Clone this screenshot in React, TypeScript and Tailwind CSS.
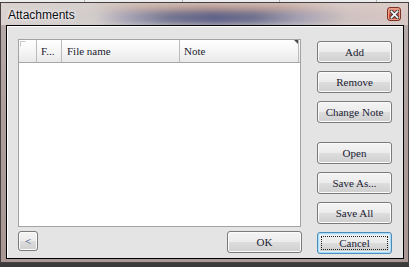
import type { ReactNode } from "react";

const serif = "font-['Liberation_Serif','Times_New_Roman',serif]";

function WinButton({
  children,
  className = "",
  focused = false,
}: {
  children: ReactNode;
  className?: string;
  focused?: boolean;
}) {
  return (
    <button
      className={
        "relative flex shrink-0 items-center justify-center rounded-[3px] border text-[11px] leading-none text-[#1c1c34] " +
        serif +
        " " +
        (focused
          ? "border-[#4f8bb8] bg-[linear-gradient(#f2f2f2_0%,#ebebeb_48%,#dcdcdc_52%,#cdcdcd_100%)] shadow-[inset_0_0_0_1px_#a9dcf6,inset_0_0_0_2px_#d4eefb] "
          : "border-[#7a7a7a] bg-[linear-gradient(#f4f4f4_0%,#ececec_48%,#dddddd_52%,#cfcfcf_100%)] shadow-[inset_0_0_0_1px_#fbfbfb] ") +
        className
      }
    >
      {children}
      {focused && <span className="pointer-events-none absolute inset-[3px] border border-dotted border-[#222]" />}
    </button>
  );
}

function CloseButton() {
  return (
    <div className="flex h-[14px] w-[14px] items-center justify-center rounded-[3px] border border-[#7c3326] bg-[linear-gradient(#e79a83_0%,#d9664c_45%,#c43f2a_55%,#d05a40_100%)] shadow-[inset_0_0_0_1px_#eba08c]">
      <svg width="9" height="9" viewBox="0 0 9 9">
        <path d="M1.5 1.5 L7.5 7.5 M7.5 1.5 L1.5 7.5" stroke="#3f3f4a" strokeWidth="3.4" strokeLinecap="square" />
        <path d="M1.5 1.5 L7.5 7.5 M7.5 1.5 L1.5 7.5" stroke="#ffffff" strokeWidth="1.6" strokeLinecap="square" />
      </svg>
    </div>
  );
}

export default function App() {
  return (
    <div className="flex h-[267px] w-[409px] flex-col overflow-hidden bg-[#3b3b3b]">
      {/* strip of whatever sits behind the dialog */}
      <div className="flex h-[2px] shrink-0 bg-[#ececec]">
        <div className="w-[85px] border-r border-[#b4b4b4]" />
        <div className="w-[98px] border-r border-[#b4b4b4]" />
        <div className="w-[97px] border-r border-[#b4b4b4]" />
        <div className="w-[97px] border-r border-[#b4b4b4]" />
      </div>

      <div className="flex h-[261px] shrink-0 flex-col border border-[#474040] bg-[linear-gradient(#b8aeae,#ae9f9c_40%,#a89793)]">
        {/* title bar, aero glass */}
        <div className="relative flex h-[22px] shrink-0 items-start overflow-hidden bg-[#d7d0ce]">
          <div className="absolute inset-x-[-6px] inset-y-0 flex flex-col blur-[3px]">
            <div className="h-[8px] bg-[linear-gradient(90deg,#d9d3d1_0%,#d6cfcd_22%,#c9b2a9_34%,#bf9e93_50%,#c4a69c_68%,#d6c6c2_82%,#dccbc6_100%)]" />
            <div className="flex-1 bg-[linear-gradient(90deg,#d9d3d1_0%,#d1cbcb_24%,#a3a1b3_32%,#72748f_42%,#5f6188_52%,#6f718e_62%,#a29eb1_72%,#cfc2c1_84%,#d9c7c3_100%)]" />
          </div>
          <span className="relative mt-[5px] pl-[7px] font-['Liberation_Sans',Arial,sans-serif] text-[12px] leading-[14px] text-[#0b0b12] [text-shadow:0_0_5px_#ffffff,0_0_2px_#ffffff]">
            Attachments
          </span>
          <div className="relative mr-[7px] ml-auto mt-[4px]">
            <CloseButton />
          </div>
        </div>

        <div className="flex h-[234px]">
          <div className="w-[5px]" />
          {/* client area */}
          <div className="flex w-[398px] flex-col border border-black bg-[#e4e4e4] pl-[11px] pt-[13px] shadow-[inset_1px_1px_0_#ffffff]">
            <div className="flex">
              {/* grid */}
              <div className="flex h-[188px] w-[283px] flex-col border border-[#a3a3a3] bg-white">
                <div
                  className={
                    "flex h-[23px] border-b border-[#a6a6a6] bg-[linear-gradient(#ffffff,#f6f6f6_50%,#e9e9e9)] text-[11px] text-[#1c1c30] " +
                    serif
                  }
                >
                  <div className="relative w-[18px] border-r border-[#bcbcbc]">
                    <svg className="absolute left-[1px] top-[1px]" width="6" height="6" viewBox="0 0 6 6">
                      <path d="M0.5 5.5 L0.5 0.5 L5.5 0.5" stroke="#c4c4c4" fill="none" />
                      <path d="M1.5 4 L1.5 1.5 L4 1.5" stroke="#ffffff" fill="none" />
                    </svg>
                  </div>
                  <div className="flex w-[25px] items-center border-r border-[#bcbcbc] pl-[4px]">F...</div>
                  <div className="flex w-[118px] items-center border-r border-[#bcbcbc] pl-[5px]">File name</div>
                  <div className="relative flex flex-1 items-center border-r border-[#bcbcbc] pl-[4px]">
                    Note
                    <svg className="absolute right-0 top-0" width="4" height="4" viewBox="0 0 4 4">
                      <polygon points="0,0 4,0 4,4" fill="#4a4a4a" />
                    </svg>
                  </div>
                  <div className="w-[1px]" />
                </div>
              </div>

              {/* right buttons */}
              <div className="ml-[16px] mt-[2px] flex w-[75px] flex-col">
                <WinButton className="h-[22px] w-[75px]">Add</WinButton>
                <WinButton className="mt-[8px] h-[22px] w-[75px]">Remove</WinButton>
                <WinButton className="mt-[8px] h-[22px] w-[75px]">Change Note</WinButton>
                <WinButton className="mt-[19px] h-[22px] w-[75px]">Open</WinButton>
                <WinButton className="mt-[8px] h-[22px] w-[75px]">Save As...</WinButton>
                <WinButton className="mt-[8px] h-[22px] w-[75px]">Save All</WinButton>
              </div>
            </div>

            {/* bottom row */}
            <div className="mt-[4px] flex items-start">
              <WinButton className="h-[20px] w-[20px] text-[#1d3f78]">&lt;</WinButton>
              <WinButton className="ml-[189px] h-[22px] w-[75px]">OK</WinButton>
              <WinButton focused className="ml-[15px] mt-[1px] h-[22px] w-[75px]">
                Cancel
              </WinButton>
            </div>
          </div>
          <div className="w-[4px]" />
        </div>
      </div>
    </div>
  );
}
